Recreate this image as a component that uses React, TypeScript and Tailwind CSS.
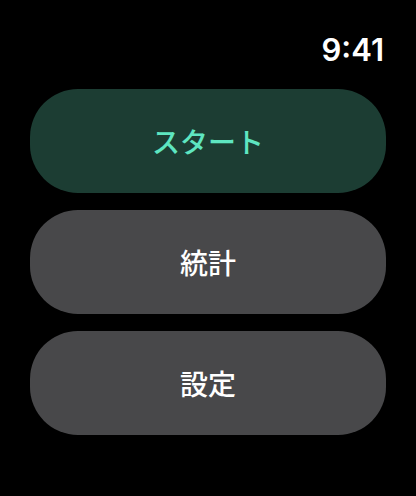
export default function App() {
  const buttons = [
    { label: "スタート", bg: "bg-[#1c3d33]", text: "text-[#5ee6c1]" },
    { label: "統計", bg: "bg-[#48484a]", text: "text-white" },
    { label: "設定", bg: "bg-[#48484a]", text: "text-white" },
  ];

  return (
    <div
      className="w-[416px] h-[496px] bg-black flex flex-col px-[30px]"
      style={{ fontFamily: 'Inter, "Noto Sans CJK JP", sans-serif' }}
    >
      <div className="flex justify-end pt-[34px] pr-[2px] h-[89px]">
        <span className="text-white text-[31px] leading-[32px] font-semibold">9:41</span>
      </div>
      <div className="flex flex-col gap-[17px]">
        {buttons.map((b) => (
          <button
            key={b.label}
            className={`h-[104px] w-full rounded-[48px] flex items-center justify-center pt-[3px] ${b.bg} ${b.text} text-[28px] font-medium`}
          >
            {b.label}
          </button>
        ))}
      </div>
    </div>
  );
}
